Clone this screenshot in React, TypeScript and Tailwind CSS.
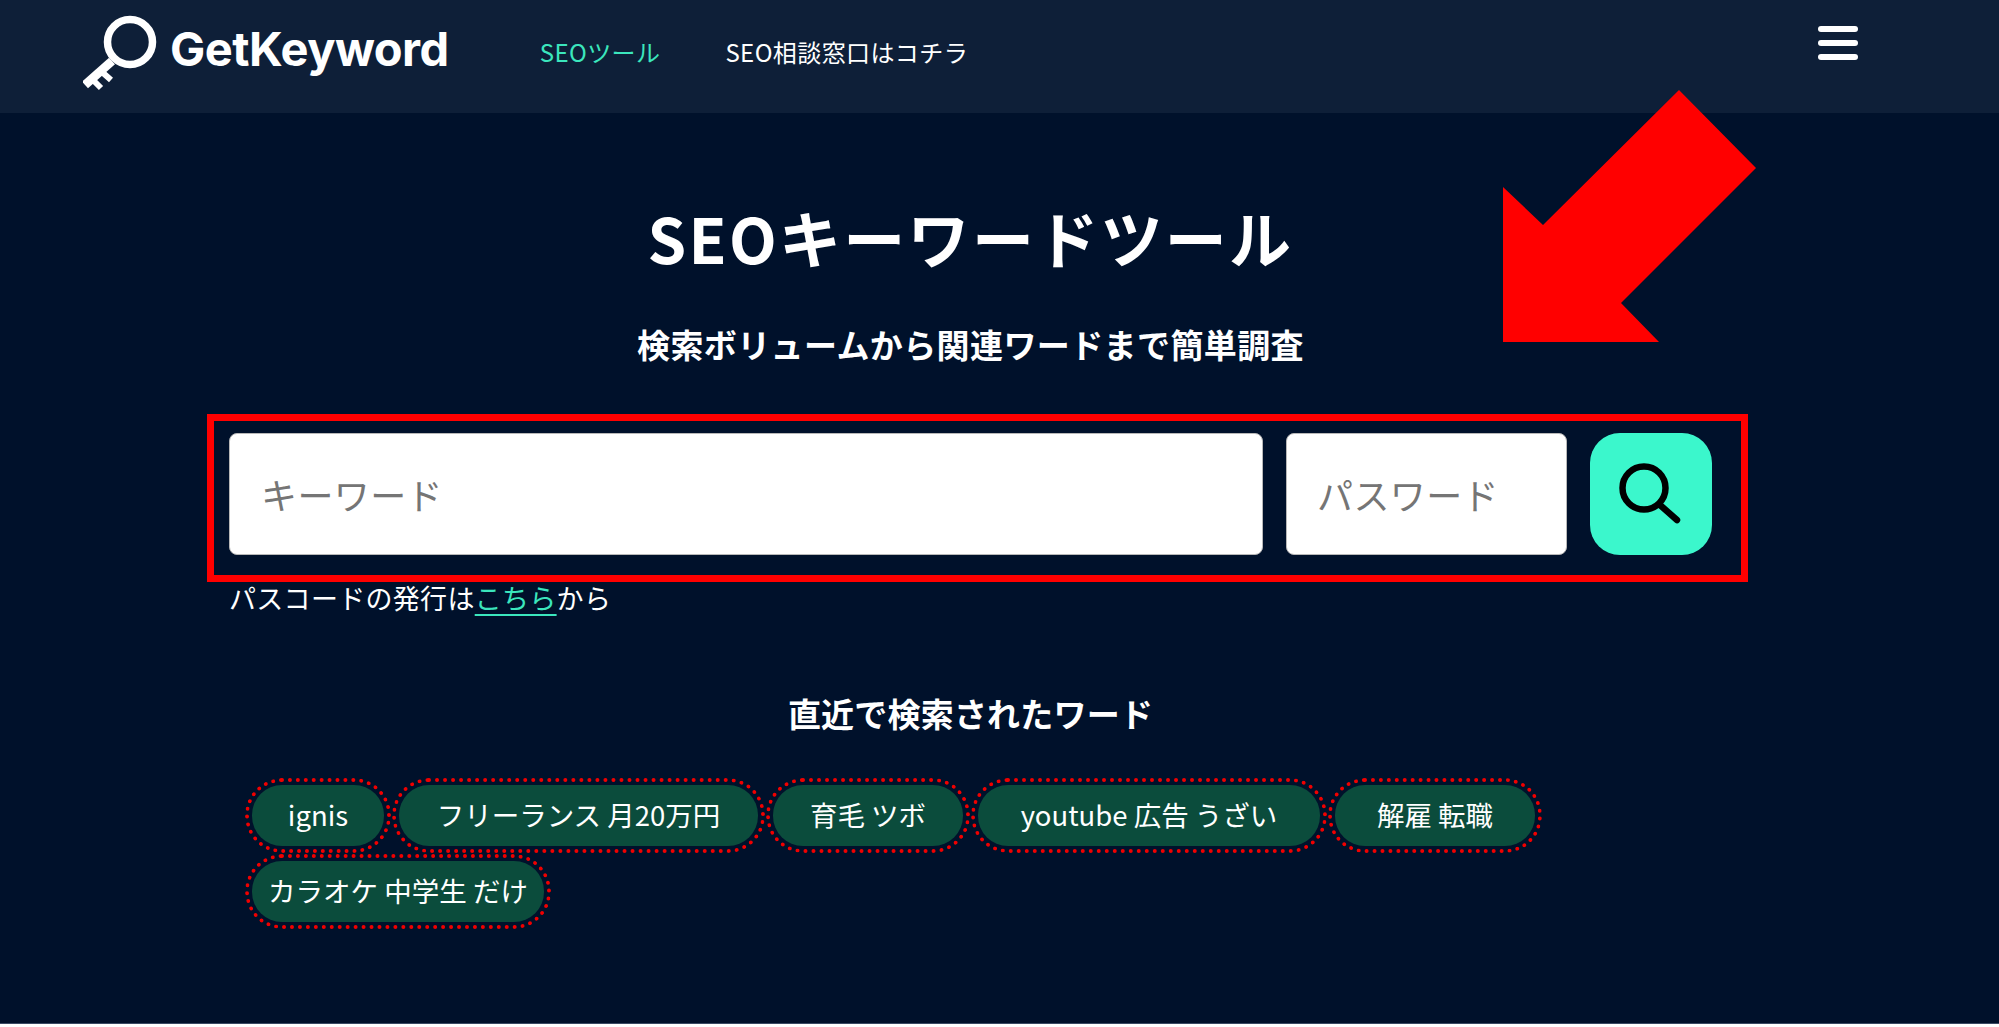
import React from 'react';

const chips = [
  { label: 'ignis', width: 'w-[132px]' },
  { label: 'フリーランス 月20万円', width: 'w-[359px]' },
  { label: '育毛 ツボ', width: 'w-[190px]' },
  { label: 'youtube 広告 うざい', width: 'w-[342px]' },
  { label: '解雇 転職', width: 'w-[200px]' },
  { label: 'カラオケ 中学生 だけ', width: 'w-[292px]' },
];

const App: React.FC = () => {
  return (
    <div className="bg-white h-[1027px] overflow-hidden font-['Noto_Sans_CJK_JP','Noto_Sans',sans-serif] text-white">
      <header className="h-[113px] bg-[#0e1f38] flex items-center pl-[83px] pb-[7px]">
        <svg width="74" height="76" viewBox="0 0 74 76" fill="none" stroke="white" className="shrink-0">
          <circle cx="47" cy="27" r="22.5" strokeWidth="7.5" />
          <path d="M29 46 L2 70" strokeWidth="9" />
          <path d="M19 57 L28 65 M10 65 L18 73" strokeWidth="6" />
        </svg>
        <span className="ml-[13px] mb-[8px] font-['Inter',sans-serif] font-bold text-[47px] leading-[56px] tracking-[-0.5px]">GetKeyword</span>
        <nav className="flex items-center ml-[91px] mb-[2px] text-[24px] leading-[32px] tracking-[0.4px]">
          <a className="text-[#3be6bd]">SEOツール</a>
          <a className="ml-[65px]">SEO相談窓口はコチラ</a>
        </nav>
        <button className="ml-auto mr-[141px] mb-[20px] flex flex-col gap-[8px]">
          <span className="block w-[40px] h-[6px] rounded-full bg-white" />
          <span className="block w-[40px] h-[6px] rounded-full bg-white" />
          <span className="block w-[40px] h-[6px] rounded-full bg-white" />
        </button>
      </header>

      <main className="relative h-[911px] bg-[#00112b] border-b border-[#3a4a63] pl-[229px]">
        <div className="w-[1483px]">
          <h1 className="pt-[84px] text-center font-bold text-[62px] leading-[80px] tracking-[2.3px]">SEOキーワードツール</h1>
          <p className="mt-[45px] text-center font-bold text-[33px] leading-[44px] tracking-[0.4px]">検索ボリュームから関連ワードまで簡単調査</p>

          <div className="mt-[48px] -ml-[22px] -mr-[36px] h-[168px] border-[7px] border-[#ff0000] pl-[15px] pr-[29px] pt-[12px] flex gap-[23px]">
            <input
              placeholder="キーワード"
              className="w-[1034px] h-[122px] rounded-[8px] bg-white border border-[#b8b8b8] pl-[31px] text-[36px] tracking-[0.4px] placeholder:text-[#757575]"
            />
            <input
              placeholder="パスワード"
              className="w-[281px] h-[122px] rounded-[8px] bg-white border border-[#b8b8b8] pl-[30px] text-[36px] tracking-[0.4px] placeholder:text-[#757575]"
            />
            <button className="w-[122px] h-[122px] rounded-[30px] bg-[#3bf7cc] flex items-center justify-center">
              <svg width="64" height="64" viewBox="0 0 64 64" fill="none" stroke="black" strokeLinecap="round">
                <circle cx="25" cy="26" r="21.5" strokeWidth="6.5" />
                <path d="M41 43 L58 58" strokeWidth="6.5" />
              </svg>
            </button>
          </div>

          <p className="text-[27px] leading-[32px] tracking-[0.3px]">
            パスコードの発行は<a className="text-[#3be6bd] underline underline-offset-[5px]">こちら</a>から
          </p>

          <h2 className="mt-[77px] text-center font-bold text-[33px] leading-[44px] tracking-[0.2px]">直近で検索されたワード</h2>

          <div className="mt-[50px] ml-[23px] flex flex-wrap gap-x-[15px] gap-y-[15px]">
            {chips.map((chip) => (
              <span
                key={chip.label}
                className={`${chip.width} h-[61px] pb-[2px] flex items-center justify-center rounded-[30px] bg-[#0b4c3c] text-[27.5px] whitespace-pre outline-[4px] outline-dotted outline-[#f00000] outline-offset-[3px]`}
              >
                {chip.label}
              </span>
            ))}
          </div>
        </div>

        {/* red arrow annotation over the page */}
        <svg className="absolute left-[1503px] -top-[23px]" width="254" height="252" viewBox="0 0 254 252">
          <polygon points="176,0 253,78 118,213 156,252 0,252 0,97 40,135" fill="#ff0000" />
        </svg>
      </main>
    </div>
  );
};

export default App;
